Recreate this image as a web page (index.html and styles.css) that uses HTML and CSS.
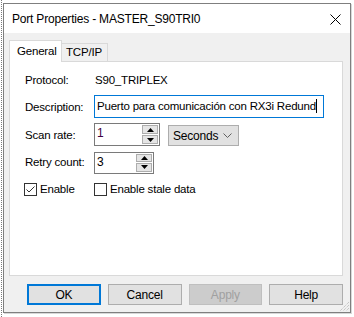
FILE: index.html
```html
<!DOCTYPE html>
<html lang="en">
<head>
    <meta charset="UTF-8">
    <title>Port Properties - MASTER_S90TRI0</title>
    <link rel="stylesheet" href="styles.css">
</head>
<body>
    <div class="desk">
        <div class="window">
            <div class="titlebar">
                <span class="title">Port Properties - MASTER_S90TRI0</span>
                <svg class="close" width="11" height="11" viewBox="0 0 11 11">
                    <path d="M0.5 0.5 L10.5 10.5 M10.5 0.5 L0.5 10.5" stroke="#000" stroke-width="1"/>
                </svg>
            </div>
            <div class="client">
                <div class="tabs">
                    <div class="tab active">General</div>
                    <div class="tab">TCP/IP</div>
                </div>
                <div class="panel">
                    <div class="form">
                        <div class="label">Protocol:</div>
                        <div class="value">S90_TRIPLEX</div>

                        <div class="label">Description:</div>
                        <div class="edit focused">Puerto para comunicación con RX3i Redund<span class="caret"></span></div>

                        <div class="label">Scan rate:</div>
                        <div class="inline">
                            <div class="spin scan">
                                <span class="spin-text purple">1</span>
                                <div class="updown">
                                    <span class="ud-btn"><svg width="7" height="4" viewBox="0 0 7 4"><path d="M3.5 0 L7 4 L0 4 Z" fill="#000"/></svg></span>
                                    <span class="ud-btn"><svg width="7" height="4" viewBox="0 0 7 4"><path d="M0 0 L7 0 L3.5 4 Z" fill="#000"/></svg></span>
                                </div>
                            </div>
                            <div class="combo">
                                <span>Seconds</span>
                                <svg width="9" height="5" viewBox="0 0 9 5"><path d="M0.5 0.5 L4.5 4.5 L8.5 0.5" fill="none" stroke="#606060" stroke-width="1"/></svg>
                            </div>
                        </div>

                        <div class="label">Retry count:</div>
                        <div class="spin retry">
                            <span class="spin-text">3</span>
                            <div class="updown">
                                <span class="ud-btn"><svg width="7" height="4" viewBox="0 0 7 4"><path d="M3.5 0 L7 4 L0 4 Z" fill="#000"/></svg></span>
                                <span class="ud-btn"><svg width="7" height="4" viewBox="0 0 7 4"><path d="M0 0 L7 0 L3.5 4 Z" fill="#000"/></svg></span>
                            </div>
                        </div>
                    </div>
                    <div class="checks">
                        <label class="check first">
                            <span class="box"><svg width="11" height="11" viewBox="0 0 11 11"><path d="M1.5 5.5 L4 8 L9.5 2.5" fill="none" stroke="#333" stroke-width="1"/></svg></span>
                            Enable
                        </label>
                        <label class="check">
                            <span class="box"></span>
                            Enable stale data
                        </label>
                    </div>
                </div>
                <div class="buttons">
                    <button class="btn default">OK</button>
                    <button class="btn">Cancel</button>
                    <button class="btn disabled">Apply</button>
                    <button class="btn">Help</button>
                </div>
            </div>
            <svg class="grip" width="12" height="12" viewBox="0 0 12 12">
                <path d="M11 2 L2 11 M11 5 L5 11 M11 8 L8 11" stroke="#b4b4b4" stroke-width="1" stroke-dasharray="1 1"/>
            </svg>
        </div>
    </div>
</body>
</html>
```

FILE: styles.css
```css
body {
    margin: 0;
    background: #ffffff;
    font-family: "Liberation Sans", Arial, sans-serif;
    font-size: 11.5px;
    letter-spacing: -0.2px;
    color: #000;
}

.desk {
    width: 354px;
    height: 317px;
    overflow: hidden;
    padding-top: 3px;
    box-sizing: border-box;
    border-left: 1px dotted #7a7a7a;
    margin-left: 1px;
}

.window {
    position: relative;
    width: 348px;
    height: 310px;
    margin-left: 1px;
    border: 1px solid #7f7f7f;
    box-sizing: border-box;
    background: #f0f0f0;
    display: flex;
    flex-direction: column;
    box-shadow: 1px 1px 0 #d8d8d8;
}

.titlebar {
    height: 29px;
    background: #ffffff;
    display: flex;
    align-items: center;
    justify-content: space-between;
    padding: 0 9px 0 8px;
}

.title {
    font-size: 12px;
    padding-top: 1px;
}

.close {
    display: block;
    margin-top: 1px;
}

.client {
    padding: 7px 7px 0 5px;
}

.tabs {
    display: flex;
    align-items: flex-end;
    height: 21px;
}

.tab {
    box-sizing: border-box;
    border: 1px solid #d9d9d9;
    border-bottom: none;
    background: #f0f0f0;
    height: 18px;
    padding: 0 5px 0 4px;
    line-height: 17px;
    position: relative;
}

.tab + .tab {
    border-left: none;
}

.tab.active {
    background: #ffffff;
    height: 22px;
    width: 53px;
    padding: 0 0 0 7px;
    line-height: 20px;
    margin-bottom: -1px;
    z-index: 1;
}

.panel {
    box-sizing: border-box;
    height: 215px;
    background: #ffffff;
    border: 1px solid #d9d9d9;
    padding: 8px 0 0 15px;
}

.form {
    display: grid;
    grid-template-columns: 69px auto;
    grid-template-rows: 20px 23px 23px 22px;
    row-gap: 5px;
    align-items: center;
    justify-items: start;
}

.value {
    padding-left: 1px;
}

.edit {
    box-sizing: border-box;
    width: 230px;
    height: 23px;
    border: 1px solid #7a7a7a;
    padding: 0 0 0 2px;
    line-height: 21px;
    white-space: nowrap;
    overflow: hidden;
}

.edit.focused {
    border-color: #0078d7;
}

.caret {
    display: inline-block;
    width: 1px;
    height: 14px;
    background: #000;
    vertical-align: -3px;
}

.inline {
    display: flex;
    align-items: flex-start;
    gap: 8px;
    height: 23px;
}

.spin {
    box-sizing: border-box;
    display: flex;
    justify-content: space-between;
    border: 1px solid #7a7a7a;
    background: #fff;
    padding: 1px 1px 1px 2px;
}

.spin.scan {
    width: 66px;
    height: 23px;
}

.spin.retry {
    width: 60px;
    height: 22px;
    margin-top: 1px;
}

.spin-text {
    line-height: 17px;
    font-size: 12px;
}

.purple {
    color: #400040;
}

.updown {
    display: flex;
    flex-direction: column;
    width: 16px;
}

.ud-btn {
    flex: 1;
    box-sizing: border-box;
    border: 1px solid #adadad;
    background: #e5e5e5;
    display: flex;
    align-items: center;
    justify-content: center;
}

.ud-btn + .ud-btn {
    margin-top: 1px;
}

.combo {
    box-sizing: border-box;
    width: 71px;
    height: 21px;
    margin-top: 2px;
    border: 1px solid #adadad;
    background: #e1e1e1;
    display: flex;
    align-items: center;
    justify-content: space-between;
    padding: 0 6px 0 4px;
    font-size: 12px;
}

.checks {
    display: flex;
    margin-top: 9px;
    height: 14px;
    align-items: center;
}

.check {
    display: flex;
    align-items: center;
    gap: 3px;
}

.check.first {
    width: 70px;
    margin-left: -1px;
}

.box {
    box-sizing: border-box;
    width: 13px;
    height: 13px;
    border: 1px solid #333;
    background: #fff;
    display: flex;
    align-items: center;
    justify-content: center;
}

.buttons {
    display: flex;
    gap: 7px;
    padding: 8px 0 0 18px;
}

.btn {
    box-sizing: border-box;
    width: 74px;
    height: 21px;
    border: 1px solid #adadad;
    background: #e1e1e1;
    font-family: inherit;
    font-size: 12px;
    letter-spacing: -0.2px;
    color: #000;
    padding: 0;
}

.btn.default {
    border: 2px solid #0078d7;
}

.btn.disabled {
    background: #cccccc;
    border-color: #bfbfbf;
    color: #a0a0a0;
}

.grip {
    position: absolute;
    right: 0;
    bottom: 0;
}
```
